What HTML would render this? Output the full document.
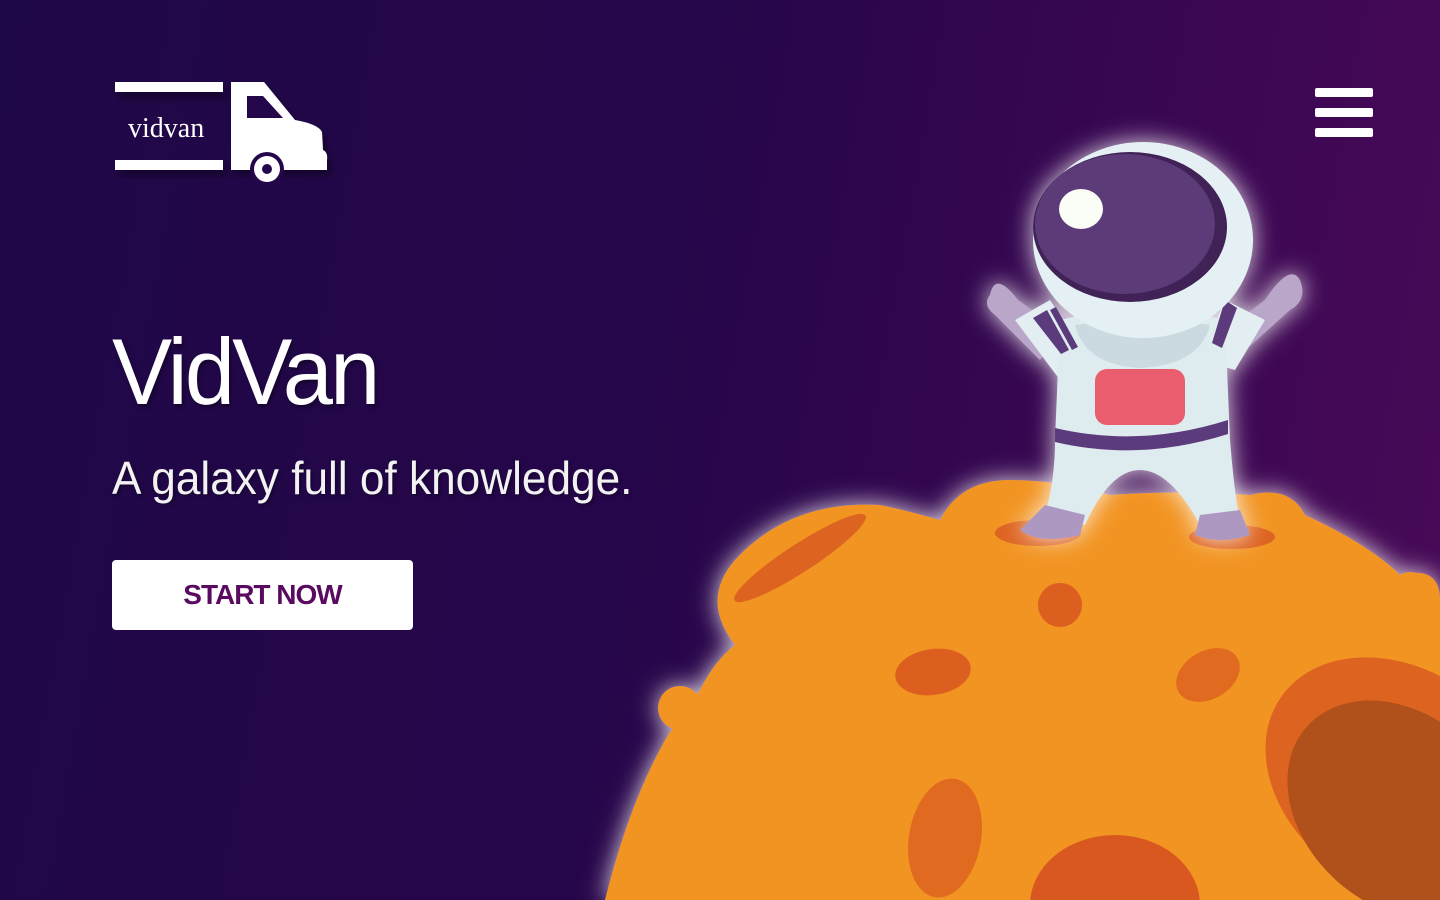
<!DOCTYPE html>
<html><head><meta charset="utf-8"><style>
html,body{margin:0;padding:0;width:1440px;height:900px;overflow:hidden}
body{background:linear-gradient(100deg,#1f0847 0%,#26064a 45%,#3a0752 75%,#4a0a58 100%);font-family:"Liberation Sans",sans-serif;position:relative}
svg{display:block}
.t1{position:absolute;left:112px;top:318px;font-size:94px;color:#fff;letter-spacing:-3px;transform:scaleX(0.96);transform-origin:left;text-shadow:2px 3px 4px rgba(0,0,0,.35)}
.t2{position:absolute;left:112px;top:451px;font-size:46px;color:#f2f2f2;transform:scaleX(0.96);transform-origin:left;white-space:nowrap;text-shadow:2px 2px 3px rgba(0,0,0,.35)}
.btn{position:absolute;left:112px;top:560px;width:301px;height:70px;background:#fff;border-radius:4px;color:#5a0a60;font-weight:bold;font-size:28px;text-align:center;line-height:70px;letter-spacing:-1px}
.bar{position:absolute;left:1315px;width:58px;height:9px;background:#fff;border-radius:2px}
</style></head><body>
<svg width="1440" height="900" style="position:absolute;left:0;top:0">
<defs>
<filter id="glow" x="-20%" y="-20%" width="140%" height="140%"><feGaussianBlur in="SourceAlpha" stdDeviation="12" result="b"/><feFlood flood-color="#fff" flood-opacity="0.85"/><feComposite in2="b" operator="in"/><feMerge><feMergeNode/><feMergeNode in="SourceGraphic"/></feMerge></filter>
<filter id="sh"><feDropShadow dx="4" dy="6" stdDeviation="4" flood-color="#000" flood-opacity="0.4"/></filter>
</defs>
<!-- logo -->
<g fill="#fff" filter="url(#sh)">
<rect x="115" y="82" width="108" height="10"/>
<rect x="115" y="160" width="108" height="10"/>
<path d="M231 82 H264 L295 120 Q318 124 322 132 L323 150 Q328 152 327 160 V170 H231 Z"/>
</g>
<path d="M247 96 H263 L283 118 H247 Z" fill="#24074a"/>
<circle cx="267" cy="169" r="17" fill="#24074a"/>
<circle cx="267" cy="169" r="13" fill="#fff"/>
<circle cx="267" cy="169" r="5" fill="#24074a"/>
<text x="128" y="137" font-family="Liberation Serif, serif" font-size="28" fill="#fff">vidvan</text>
<!-- planet -->
<g filter="url(#glow)" fill="#f29421">
<path d="M605 900 Q630 800 668 735 L700 690 Q715 660 735 645 Q700 600 735 560 Q790 500 880 505 Q905 510 940 520 Q960 480 1010 480 Q1060 480 1110 495 Q1180 490 1250 495 Q1290 485 1305 515 Q1370 545 1400 575 Q1440 565 1440 600 L1440 900 Z"/>
<circle cx="680" cy="708" r="22"/>
<circle cx="1410" cy="592" r="20"/>
</g>
<g>
<ellipse cx="800" cy="558" rx="78" ry="14" transform="rotate(-33 800 558)" fill="#dd6320"/>
<circle cx="1060" cy="605" r="22" fill="#dd5f20"/>
<ellipse cx="933" cy="672" rx="38" ry="23" transform="rotate(-8 933 672)" fill="#dd5f20"/>
<ellipse cx="1208" cy="675" rx="34" ry="24" transform="rotate(-30 1208 675)" fill="#e06a1f"/>
<ellipse cx="945" cy="838" rx="36" ry="60" transform="rotate(10 945 838)" fill="#e06a1f"/>
<ellipse cx="1115" cy="905" rx="85" ry="70" fill="#d9581f"/>
<ellipse cx="1400" cy="780" rx="145" ry="110" transform="rotate(35 1400 780)" fill="#dd6320"/>
<ellipse cx="1400" cy="810" rx="125" ry="95" transform="rotate(42 1400 810)" fill="#b0501a"/>
<ellipse cx="1038" cy="533" rx="43" ry="13" fill="#dd6320"/>
<ellipse cx="1232" cy="537" rx="43" ry="12" fill="#dd6320"/>
</g>
<!-- astronaut -->
<g filter="url(#glow)">
<path d="M1018 300 Q995 270 990 295 Q982 305 995 315 L1040 360 L1060 330 Z" fill="#b9a6c8"/>
<path d="M1265 300 Q1290 262 1300 280 Q1308 300 1290 310 L1240 355 L1225 330 Z" fill="#b9a6c8"/>
<path d="M1015 320 L1050 300 L1090 360 L1060 380 Z" fill="#e2eef1"/>
<path d="M1265 320 L1225 300 L1200 360 L1235 370 Z" fill="#e2eef1"/>
<path d="M1060 320 Q1140 300 1225 320 L1230 440 Q1235 500 1240 520 L1200 525 Q1170 470 1140 470 Q1110 470 1085 525 L1045 515 Q1055 480 1055 440 Z" fill="#dfecef"/>
<path d="M1045 505 L1085 515 L1080 535 Q1040 545 1020 530 Z" fill="#ad98c2"/>
<path d="M1200 515 L1240 510 L1250 535 Q1220 545 1195 535 Z" fill="#ad98c2"/>
<path d="M1075 325 Q1140 315 1210 325 Q1200 365 1140 368 Q1085 365 1075 325 Z" fill="#cbdae0"/>
<rect x="1095" y="369" width="90" height="56" rx="12" fill="#e95d6e"/>
<path d="M1055 428 Q1140 448 1228 420 L1228 434 Q1140 462 1055 442 Z" fill="#5c3a7c"/>
<path d="M1033 318 l14 -8 l22 40 l-8 4 Z M1050 310 l6 -3 l22 40 l-6 3Z" fill="#5c3a7c"/>
<path d="M1225 300 l12 8 l-15 40 l-10 -5 Z" fill="#5c3a7c"/>
<ellipse cx="1143" cy="240" rx="110" ry="98" fill="#e4f0f3"/>
<ellipse cx="1130" cy="227" rx="97" ry="75" fill="#3f2356"/>
<ellipse cx="1125" cy="224" rx="90" ry="70" fill="#5b3a78"/>
<ellipse cx="1081" cy="209" rx="22" ry="20" fill="#fbfdf7"/>
</g>
</svg>
<div class="t1">VidVan</div>
<div class="t2">A galaxy full of knowledge.</div>
<div class="btn">START NOW</div>
<div class="bar" style="top:88px"></div>
<div class="bar" style="top:108px"></div>
<div class="bar" style="top:128px"></div>
</body></html>
